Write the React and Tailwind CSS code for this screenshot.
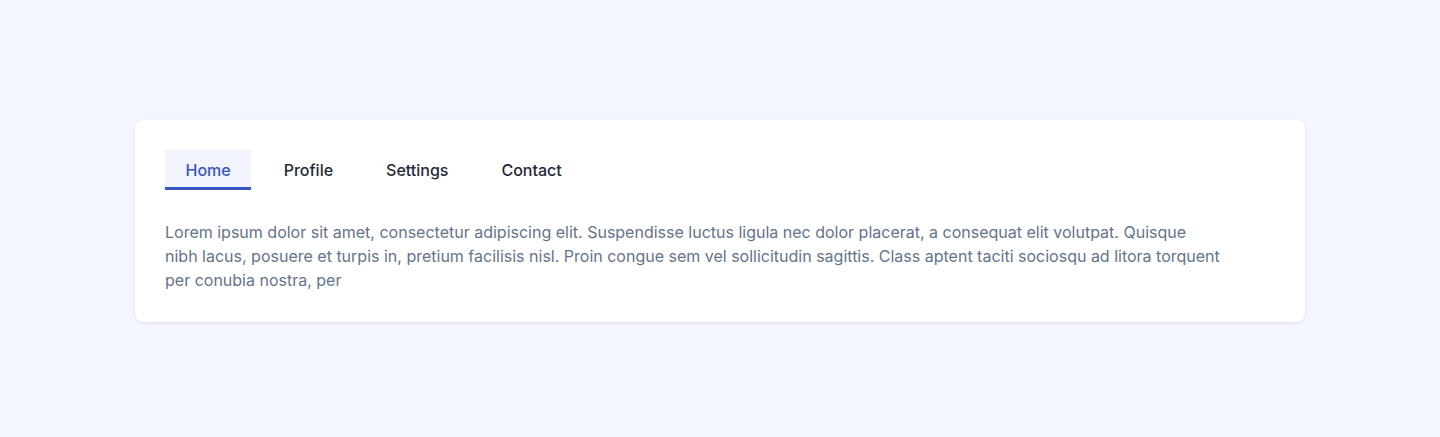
import React, { useState } from 'react';

const tabs = ['Home', 'Profile', 'Settings', 'Contact'];

const text =
  'Lorem ipsum dolor sit amet, consectetur adipiscing elit. Suspendisse luctus ligula nec dolor placerat, a consequat elit volutpat. Quisque nibh lacus, posuere et turpis in, pretium facilisis nisl. Proin congue sem vel sollicitudin sagittis. Class aptent taciti sociosqu ad litora torquent per conubia nostra, per';

const App = () => {
  const [active, setActive] = useState('Home');

  return (
    <div className="min-h-[437px] bg-[#f3f6fe] px-[135px] pt-[120px] font-['Inter',sans-serif]">
      <div className="rounded-lg bg-white p-[30px] shadow-[0_1px_3px_rgba(30,41,80,0.12)]">
        <div className="flex gap-3">
          {tabs.map((tab) => (
            <button
              key={tab}
              onClick={() => setActive(tab)}
              className={
                tab === active
                  ? 'border-b-[3px] border-[#3656c6] bg-[#f1f4fd] px-[20.5px] pt-2 pb-[5px] text-base leading-6 font-medium text-[#3656c6]'
                  : 'border-b-[3px] border-transparent px-[20.5px] pt-2 pb-[5px] text-base leading-6 font-medium text-[#1f2937]'
              }
            >
              {tab}
            </button>
          ))}
        </div>
        <p className="mt-[30px] max-w-[1056px] text-base leading-6 text-[#64748b]">{text}</p>
      </div>
    </div>
  );
};

export default App;
